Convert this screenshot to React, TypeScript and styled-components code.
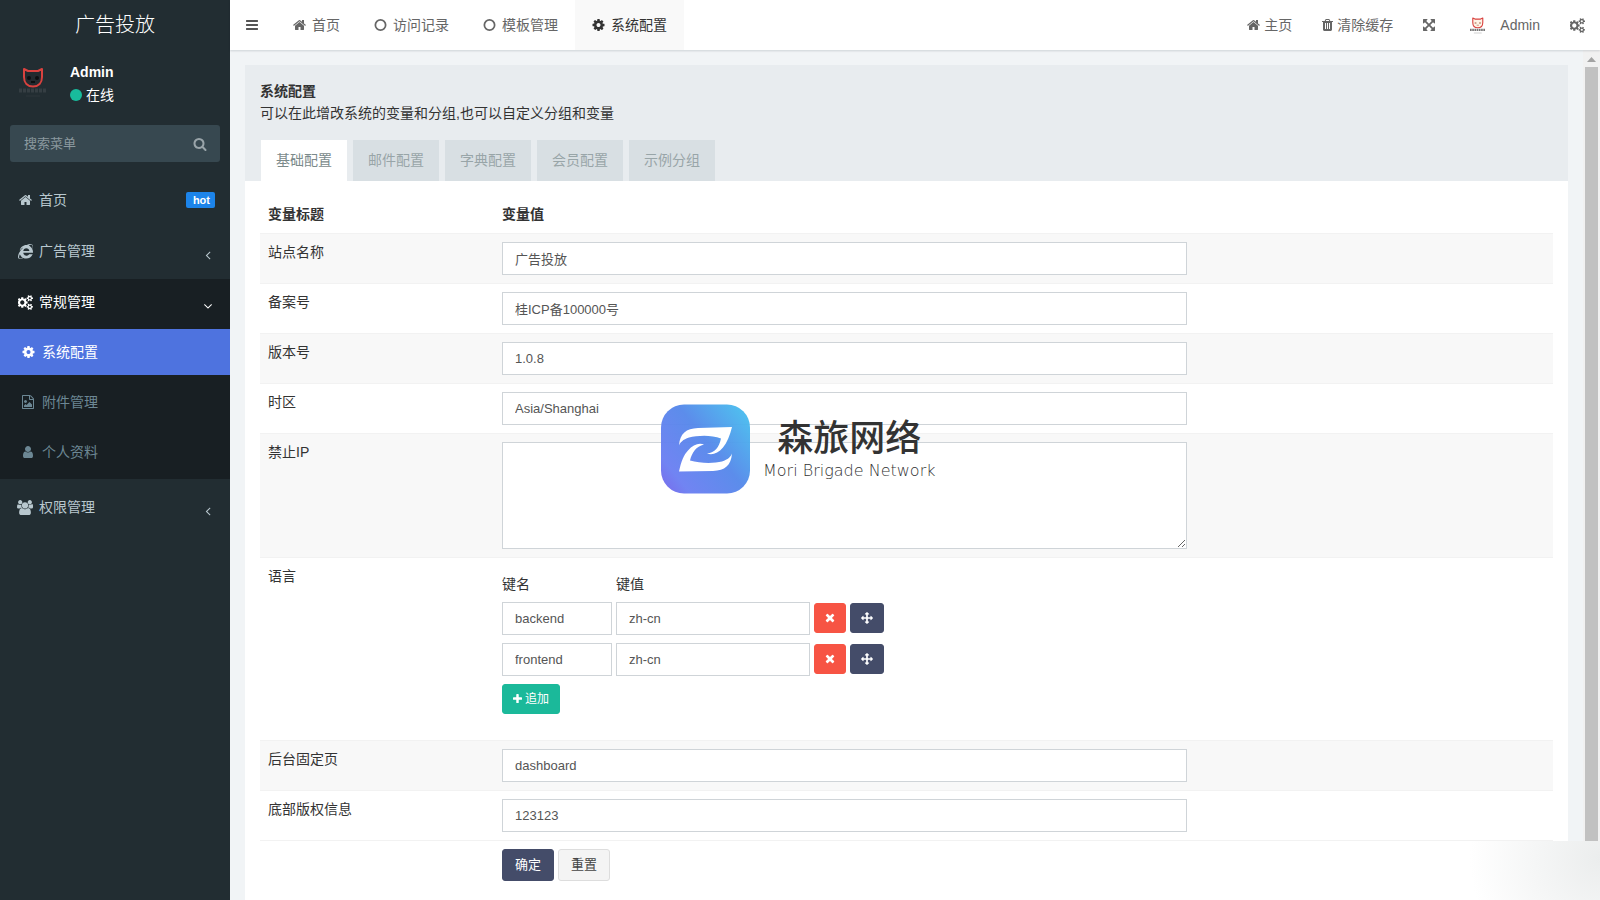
import React from "react";
import styled, { createGlobalStyle, css } from "styled-components";
import { FaInternetExplorer } from "react-icons/fa";

const GlobalStyle = createGlobalStyle`
  *, *::before, *::after { box-sizing: border-box; }
  html, body, #root { height: 100%; }
  body {
    margin: 0;
    font-family: "Liberation Sans", "Noto Sans CJK SC", sans-serif;
    font-size: 14px;
    line-height: 20px;
    color: #333;
    background: #f1f4f6;
  }
  button, input, textarea { font-family: inherit; }
  a { color: inherit; text-decoration: none; }
  ul { list-style: none; margin: 0; padding: 0; }
`;

/* ---------- icons ---------- */

const PATHS = {
  home: "M1472 992v480q0 26-19 45t-45 19h-384v-384h-256v384h-384q-26 0-45-19t-19-45v-480q0-1 .5-3t.5-3l575-474 575 474q1 2 1 6zm223-69l-62 74q-8 9-21 11h-3q-13 0-21-7l-692-577-692 577q-12 8-24 7-13-2-21-11l-62-74q-8-10-7-23.5t11-21.5l719-599q32-26 76-26t76 26l244 204v-195q0-14 9-23t23-9h192q14 0 23 9t9 23v408l219 182q10 8 11 21.5t-7 23.5z",
  cog: "M1152 896q0-106-75-181t-181-75-181 75-75 181 75 181 181 75 181-75 75-181zm512-109v222q0 12-8 23t-20 13l-185 28q-19 54-39 91 35 50 107 138 10 12 10 25t-9 23q-27 37-99 108t-94 71q-12 0-26-9l-138-108q-44 23-91 38-16 136-29 186-7 28-36 28h-222q-14 0-24.5-8.5t-11.5-21.5l-28-184q-49-16-90-37l-141 107q-10 9-25 9-14 0-25-11-126-114-165-168-7-10-7-23 0-12 8-23 15-21 51-66.5t54-70.5q-27-50-41-99l-183-27q-13-2-21-12.5t-8-23.5v-222q0-12 8-23t19-13l186-28q14-46 39-92-40-57-107-138-10-12-10-24 0-10 9-23 26-36 98.5-107.5t94.5-71.5q13 0 26 10l138 107q44-23 91-38 16-136 29-186 7-28 36-28h222q14 0 24.5 8.5t11.5 21.5l28 184q49 16 90 37l142-107q9-9 24-9 13 0 25 10 129 119 165 170 7 8 7 22 0 12-8 23-15 21-51 66.5t-54 70.5q26 50 41 98l183 28q13 2 21 12.5t8 23.5z",
  cogs: "M832 896q0-106-75-181t-181-75-181 75-75 181 75 181 181 75 181-75 75-181zm768 512q0-52-38-90t-90-38-90 38-38 90q0 53 37.5 90.5t90.5 37.5 90.5-37.5 37.5-90.5zm0-1024q0-52-38-90t-90-38-90 38-38 90q0 53 37.5 90.5t90.5 37.5 90.5-37.5 37.5-90.5zm-384 421v185q0 10-7 19.5t-16 10.5l-155 24q-11 35-32 76 34 48 90 115 7 11 7 20 0 12-7 19-23 30-82.5 89.5t-78.5 59.5q-11 0-21-7l-115-90q-37 19-77 31-11 108-23 155-7 24-30 24h-186q-11 0-20-7.5t-10-17.5l-23-153q-34-10-75-31l-118 89q-7 7-20 7-11 0-21-8-144-133-144-160 0-9 7-19 10-14 41-53t47-61q-23-44-35-82l-152-24q-10-1-17-9.5t-7-19.5v-185q0-10 7-19.5t16-10.5l155-24q11-35 32-76-34-48-90-115-7-11-7-20 0-12 7-20 22-30 82-89t79-59q11 0 21 7l115 90q34-18 77-32 11-108 23-154 7-24 30-24h186q11 0 20 7.5t10 17.5l23 153q34 10 75 31l118-89q8-7 20-7 11 0 21 8 144 133 144 160 0 8-7 19-12 16-42 54t-45 60q23 48 34 82l152 23q10 2 17 10.5t7 19.5zm640 533v140q0 16-149 31-12 27-30 52 51 113 51 138 0 4-4 7-122 71-124 71-8 0-46-47t-52-68q-20 2-30 2t-30-2q-14 21-52 68t-46 47q-2 0-124-71-4-3-4-7 0-25 51-138-18-25-30-52-149-15-149-31v-140q0-16 149-31 13-29 30-52-51-113-51-138 0-4 4-7 4-2 35-20t59-34 30-16q8 0 46 46.5t52 67.5q20-2 30-2t30 2q51-71 92-112l6-2q4 0 124 70 4 3 4 7 0 25-51 138 17 23 30 52 149 15 149 31zm0-1024v140q0 16-149 31-12 27-30 52 51 113 51 138 0 4-4 7-122 71-124 71-8 0-46-47t-52-68q-20 2-30 2t-30-2q-14 21-52 68t-46 47q-2 0-124-71-4-3-4-7 0-25 51-138-18-25-30-52-149-15-149-31v-140q0-16 149-31 13-29 30-52-51-113-51-138 0-4 4-7 4-2 35-20t59-34 30-16q8 0 46 46.5t52 67.5q20-2 30-2t30 2q51-71 92-112l6-2q4 0 124 70 4 3 4 7 0 25-51 138 17 23 30 52 149 15 149 31z",
  move: "M1792 896q0 26-19 45l-256 256q-19 19-45 19t-45-19-19-45v-128h-384v384h128q26 0 45 19t19 45-19 45l-256 256q-19 19-45 19t-45-19l-256-256q-19-19-19-45t19-45 45-19h128v-384h-384v128q0 26-19 45t-45 19-45-19l-256-256q-19-19-19-45t19-45l256-256q19-19 45-19t45 19 19 45v128h384v-384h-128q-26 0-45-19t-19-45 19-45l256-256q19-19 45-19t45 19l256 256q19 19 19 45t-19 45-45 19h-128v384h384v-128q0-26 19-45t45-19 45 19l256 256q19 19 19 45z",
  times: "M1490 1322q0 40-28 68l-136 136q-28 28-68 28t-68-28l-294-294-294 294q-28 28-68 28t-68-28l-136-136q-28-28-28-68t28-68l294-294-294-294q-28-28-28-68t28-68l136-136q28-28 68-28t68 28l294 294 294-294q28-28 68-28t68 28l136 136q28 28 28 68t-28 68l-294 294 294 294q28 28 28 68z",
  plus: "M1600 736v192q0 40-28 68t-68 28h-416v416q0 40-28 68t-68 28h-192q-40 0-68-28t-28-68v-416h-416q-40 0-68-28t-28-68v-192q0-40 28-68t68-28h416v-416q0-40 28-68t68-28h192q40 0 68 28t28 68v416h416q40 0 68 28t28 68z",
  bars: "M1664 1344v128q0 26-19 45t-45 19h-1408q-26 0-45-19t-19-45v-128q0-26 19-45t45-19h1408q26 0 45 19t19 45zm0-512v128q0 26-19 45t-45 19h-1408q-26 0-45-19t-19-45v-128q0-26 19-45t45-19h1408q26 0 45 19t19 45zm0-512v128q0 26-19 45t-45 19h-1408q-26 0-45-19t-19-45v-128q0-26 19-45t45-19h1408q26 0 45 19t19 45z",
  search: "M1216 832q0-185-131.5-316.5t-316.5-131.5-316.5 131.5-131.5 316.5 131.5 316.5 316.5 131.5 316.5-131.5 131.5-316.5zm512 832q0 52-38 90t-90 38q-54 0-90-38l-343-342q-179 124-399 124-143 0-273.5-55.5t-225-150-150-225-55.5-273.5 55.5-273.5 150-225 225-150 273.5-55.5 273.5 55.5 225 150 150 225 55.5 273.5q0 220-124 399l343 343q37 37 37 90z",
  angleLeft: "M1203 544q0 13-10 23l-393 393 393 393q10 10 10 23t-10 23l-50 50q-10 10-23 10t-23-10l-466-466q-10-10-10-23t10-23l466-466q10-10 23-10t23 10l50 50q10 10 10 23z",
  angleDown: "M1395 736q0 13-10 23l-466 466q-10 10-23 10t-23-10l-466-466q-10-10-10-23t10-23l50-50q10-10 23-10t23 10l393 393 393-393q10-10 23-10t23 10l50 50q10 10 10 23z",
  expand: "M1411 541l-355 355 355 355 144-144q29-31 70-14 39 17 39 59v448q0 26-19 45t-45 19h-448q-42 0-59-40-17-39 14-69l144-144-355-355-355 355 144 144q31 30 14 69-17 40-59 40h-448q-26 0-45-19t-19-45v-448q0-42 40-59 39-17 69 14l144 144 355-355-355-355-144 144q-19 19-45 19-12 0-24-5-40-17-40-59v-448q0-26 19-45t45-19h448q42 0 59 40 17 39-14 69l-144 144 355 355 355-355-144-144q-31-30-14-69 17-40 59-40h448q26 0 45 19t19 45v448q0 42-39 59-13 5-25 5-26 0-45-19z",
  user: "M1536 1399q0 109-62.5 187t-150.5 78h-854q-88 0-150.5-78t-62.5-187q0-85 8.5-160.5t31.5-152 58.5-131 94-89 134.5-34.5q131 128 313 128t313-128q76 0 134.5 34.5t94 89 58.5 131 31.5 152 8.5 160.5zm-256-887q0 159-112.5 271.5t-271.5 112.5-271.5-112.5-112.5-271.5 112.5-271.5 271.5-112.5 271.5 112.5 112.5 271.5z",
  fileImage: "M1596 380q28 28 48 76t20 88v1152q0 40-28 68t-68 28h-1344q-40 0-68-28t-28-68v-1600q0-40 28-68t68-28h896q40 0 88 20t76 48zm-444-244v376h376q-10-29-22-41l-313-313q-12-12-41-22zm384 1528v-1024h-416q-40 0-68-28t-28-68v-416h-768v1536h1280zm-128-448v320h-1024v-192l192-192 128 128 384-384zm-832-192q-80 0-136-56t-56-136 56-136 136-56 136 56 56 136-56 136-136 56z",
  trash: "M704 1376v-704q0-14-9-23t-23-9h-64q-14 0-23 9t-9 23v704q0 14 9 23t23 9h64q14 0 23-9t9-23zm256 0v-704q0-14-9-23t-23-9h-64q-14 0-23 9t-9 23v704q0 14 9 23t23 9h64q14 0 23-9t9-23zm256 0v-704q0-14-9-23t-23-9h-64q-14 0-23 9t-9 23v704q0 14 9 23t23 9h64q14 0 23-9t9-23zm-544-992h448l-48-117q-7-9-17-11h-317q-10 2-17 11zm928 32v64q0 14-9 23t-23 9h-96v948q0 83-47 143.5t-113 60.5h-832q-66 0-113-58.5t-47-141.5v-952h-96q-14 0-23-9t-9-23v-64q0-14 9-23t23-9h309l70-167q15-37 54-63t79-26h320q40 0 79 26t54 63l70 167h309q14 0 23 9t9 23z",
  group: "M593 896q-162 5-265 128h-134q-82 0-138-40.5t-56-118.5q0-353 124-353 6 0 43.5 21t97.5 42.5 119 21.5q67 0 133-23-5 37-5 66 0 159 93 292zm1071 637q0 120-73 189.5t-194 69.5h-874q-121 0-194-69.5t-73-189.5q0-53 3.5-103.5t14-109 26.5-108.5 43-97.5 62-81 85.5-53.5 111.5-20q10 0 43 21.5t73 48 107 48 135 21.5 135-21.5 107-48 73-48 43-21.5q61 0 111.5 20t85.5 53.5 62 81 43 97.5 26.5 108.5 14 109 3.5 103.5zm-1024-1277q0 106-75 181t-181 75-181-75-75-181 75-181 181-75 181 75 75 181zm704 384q0 159-112.5 271.5t-271.5 112.5-271.5-112.5-112.5-271.5 112.5-271.5 271.5-112.5 271.5 112.5 112.5 271.5zm576 225q0 78-56 118.5t-138 40.5h-134q-103-123-265-128 93-133 93-292 0-29-5-66 66 23 133 23 59 0 119-21.5t97.5-42.5 43.5-21q124 0 124 353zm-128-609q0 106-75 181t-181 75-181-75-75-181 75-181 181-75 181 75 75 181z",
  circle: "M896 352a544 544 0 1 0 0 1088a544 544 0 1 0 0-1088zM896 128a768 768 0 1 1 0 1536a768 768 0 1 1 0-1536z",
};
type IconName = keyof typeof PATHS;

/* view box and width (at a 14px height) of the glyphs that are not square */
const SHAPES: Partial<Record<IconName, { box: string; width: number }>> = {
  home: { box: "64 0 1664 1792", width: 13 },
  trash: { box: "192 0 1408 1792", width: 11 },
  expand: { box: "128 0 1536 1792", width: 12 },
  bars: { box: "128 0 1536 1792", width: 12 },
  times: { box: "192 0 1408 1792", width: 11 },
  plus: { box: "192 0 1408 1792", width: 11 },
  circle: { box: "64 64 1664 1664", width: 13 },
  cog: { box: "64 64 1664 1664", width: 13 },
  cogs: { box: "64 0 1792 1792", width: 15 },
  group: { box: "0 0 1920 1792", width: 16 },
};

const Svg = styled.svg`
  display: block;
  flex: none;
  fill: currentColor;
`;

function Icon({ name, size = 14 }: { name: IconName; size?: number }) {
  const shape = SHAPES[name] ?? { box: "0 0 1792 1792", width: 14 };
  return (
    <Svg
      viewBox={shape.box}
      width={shape.width + size - 14}
      height={shape.width > 14 ? 15 : size}
      fillRule="evenodd"
      aria-hidden="true"
    >
      <path d={PATHS[name]} />
    </Svg>
  );
}

function CatLogo({ size, caption, face, eyes }: { size: number; caption: string; face: string; eyes: string }) {
  return (
    <Svg width={size} height={size} viewBox="0 0 45 45" aria-hidden="true">
      <path
        d="M14 9L18 11H28L32 9V17C32 23 28.500 26.500 23 26.500S14 23 14 17Z"
        fill={face}
        stroke="#d9423f"
        strokeWidth="2"
        strokeLinejoin="round"
      />
      <circle cx="19" cy="18" r="2" fill={eyes} />
      <circle cx="27" cy="18" r="2" fill={eyes} />
      <path d="M21 22h4" stroke={eyes} strokeWidth="2" />
      <path d="M9 30.500h28" stroke={caption} strokeWidth="4" strokeDasharray="3 1" />
      <path d="M16 36h14" stroke={caption} strokeWidth="1" opacity="0.600" />
    </Svg>
  );
}

/* ---------- shell ---------- */

const Shell = styled.div`
  display: flex;
  min-height: 100%;
`;

const Sidebar = styled.aside`
  flex: none;
  width: 230px;
  background: #222d32;
  color: #b8c7ce;
`;

const Brand = styled.a`
  display: block;
  line-height: 50px;
  font-size: 20px;
  font-weight: 300;
  text-align: center;
  color: #fff;
`;

const UserPanel = styled.div`
  display: flex;
  gap: 15px;
  height: 75px;
  padding: 10px;
  color: #fff;
`;

const UserInfo = styled.div`
  display: flex;
  flex-direction: column;
  gap: 3px;
  padding-top: 2px;
`;

const Status = styled.a`
  display: flex;
  align-items: center;
  gap: 4px;
`;

const StatusDot = styled.i`
  width: 12px;
  height: 12px;
  border-radius: 50%;
  background: #18bc9c;
`;

const SearchForm = styled.form`
  display: flex;
  margin: 0 10px 15px;
  height: 37px;
  border-radius: 3px;
  background: #374850;
`;

const SearchInput = styled.input`
  flex: 1;
  min-width: 0;
  padding: 0 14px;
  border: 0;
  background: transparent;
  color: #fff;
  font-size: 13px;
  &::placeholder { color: #8b999f; opacity: 1; }
`;

const SearchButton = styled.button`
  width: 40px;
  padding: 0 13px;
  border: 0;
  background: transparent;
  color: #99a4a9;
`;

const MenuItem = styled.li`
  margin-bottom: 5px;
`;

const MenuLink = styled.a<{ $open?: boolean }>`
  display: flex;
  align-items: center;
  gap: 6px;
  height: 46px;
  padding: 0 15px 0 17px;
  ${(p) => p.$open && css`
    color: #fff;
    background: #181f23;
  `}
`;

const IconSlot = styled.span`
  display: flex;
  justify-content: center;
  width: 16px;
`;

const Badge = styled.small`
  margin-left: auto;
  padding: 0 5px 0 7px;
  border-radius: 2px;
  background: #1c84ea;
  color: #fff;
  font-size: 11px;
  line-height: 16px;
  font-weight: 700;
`;

const Caret = styled.span`
  margin-left: auto;
  padding-top: 8px;
`;

const SubMenu = styled.ul`
  padding-top: 4px;
  background: #181f23;
`;

const SubItem = styled.li`
  padding-bottom: 4px;
`;

const SubLink = styled.a<{ $active?: boolean }>`
  display: flex;
  align-items: center;
  gap: 6px;
  height: 46px;
  padding-left: 20px;
  color: ${(p) => (p.$active ? "#fff" : "#6c8794")};
  background: ${(p) => (p.$active ? "#4e73df" : "transparent")};
`;

const Main = styled.div`
  position: relative;
  flex: 1;
  min-width: 0;
  display: flex;
  flex-direction: column;
`;

const TopBar = styled.header`
  position: relative;
  display: flex;
  height: 50px;
  background: #fff;
  color: #666;
  box-shadow: 0 1px 2px rgba(0, 21, 41, 0.15);
`;

const Toggle = styled.button`
  padding: 0 16px;
  border: 0;
  background: transparent;
  color: #555;
`;

const NavTabs = styled.nav`
  display: flex;
  padding-left: 2px;
`;

const NavTab = styled.a<{ $active?: boolean }>`
  display: flex;
  align-items: center;
  gap: 6px;
  padding: 0 17px;
  color: ${(p) => (p.$active ? "#333" : "#666")};
  background: ${(p) => (p.$active ? "#f9f9f9" : "transparent")};
`;

const NavRight = styled.nav`
  display: flex;
  margin-left: auto;
`;

const NavLink = styled.a<{ $gap?: number }>`
  display: flex;
  align-items: center;
  gap: ${(p) => p.$gap ?? 4}px;
  padding: 0 15px;
`;

/* ---------- content ---------- */

const Body = styled.div`
  flex: 1;
  display: flex;
`;

const Content = styled.main`
  flex: 1;
  min-width: 0;
  display: flex;
  padding: 15px 15px 0;
`;

const Panel = styled.section`
  flex: 1;
  min-width: 0;
  background: #fff;
`;

const PanelHeading = styled.header`
  padding: 15px 15px 0;
  background: #e8ecef;
`;

const Lead = styled.div`
  padding-bottom: 16px;
  line-height: 22px;
`;

const Title = styled.strong`
  display: block;
`;

const Tabs = styled.ul`
  display: flex;
  gap: 4px;
`;

const Tab = styled.a<{ $active?: boolean }>`
  display: block;
  padding: 10px 15px;
  border: solid transparent;
  border-width: 0 1px;
  line-height: 21px;
  background: ${(p) => (p.$active ? "#fff" : "#d8dfe3")};
  background-clip: padding-box;
  color: ${(p) => (p.$active ? "#7b8a8b" : "#98a5a8")};
`;

const PanelBody = styled.form`
  padding: 15px 15px 10px;
`;

const Table = styled.table`
  width: 100%;
  table-layout: fixed;
  border-collapse: separate;
  border-spacing: 0;
  th, td {
    padding: 8px;
    text-align: left;
    vertical-align: top;
    font-weight: 400;
  }
  thead th { font-weight: 700; padding-bottom: 9px; }
  tbody tr > *, tfoot tr > * { border-top: 1px solid #f2f2f2; }
  tbody tr:nth-child(odd) > * { background: #f8f8f8; }
`;

const LabelCol = styled.col`
  width: 234px;
`;

const Field = styled.div`
  width: calc((100% + 30px) * 2 / 3 - 30px);
`;

const inputLook = css`
  display: block;
  width: 100%;
  border: 1px solid #cfd4d8;
  border-radius: 0;
  padding: 6px 12px;
  background: #fff;
  color: #555;
  font-size: 13px;
  line-height: 19px;
`;

const TextInput = styled.input`
  ${inputLook}
  height: 33px;
`;

const TextArea = styled.textarea`
  ${inputLook}
  height: 107px;
  resize: vertical;
`;

const Pairs = styled.div`
  display: grid;
  grid-template-columns: 110px 194px auto;
  justify-content: start;
  gap: 8px 4px;
  padding: 8px 0 18px;
`;

const PairTools = styled.div`
  display: flex;
  align-items: center;
  gap: 4px;
  height: 31px;
`;

const Button = styled.button<{ $tone: string; $small?: boolean; $light?: boolean }>`
  display: inline-flex;
  align-items: center;
  justify-content: center;
  gap: 3px;
  height: ${(p) => (p.$small ? 30 : 32)}px;
  padding: 0 ${(p) => (p.$small ? 10 : 12)}px;
  border: 1px solid ${(p) => (p.$light ? "#ddd" : p.$tone)};
  border-radius: 3px;
  background: ${(p) => p.$tone};
  color: ${(p) => (p.$light ? "#444" : "#fff")};
  font-size: ${(p) => (p.$small ? 12 : 13)}px;
  line-height: 18px;
`;

const Actions = styled.div`
  display: flex;
  gap: 4px;
`;

const ScrollTrack = styled.div`
  flex: none;
  width: 17px;
  padding: 0 2px;
  display: flex;
  flex-direction: column;
  align-items: stretch;
  background: #f1f1f1;
`;

const ScrollArrow = styled.svg`
  display: block;
  height: 17px;
  padding: 7px 2px 5px;
  width: 13px;
`;

const ScrollThumb = styled.div`
  flex: 1;
  margin-bottom: 59px;
  background: #c1c1c1;
`;

const CornerGlow = styled.div`
  position: absolute;
  right: 0;
  bottom: 0;
  width: 145px;
  height: 59px;
  background: radial-gradient(circle at 100% 30%, #ebeded 0, #fff 130px);
  pointer-events: none;
`;

const Watermark = styled.div`
  position: absolute;
  top: 404px;
  left: 431px;
  display: flex;
  gap: 13px;
  pointer-events: none;
`;

const WatermarkText = styled.div`
  padding-top: 5px;
  color: #333;
  text-align: center;
`;

const WatermarkName = styled.div`
  font-family: "Noto Sans CJK SC", sans-serif;
  font-size: 36px;
  font-weight: 500;
  line-height: 52px;
`;

const WatermarkLatin = styled.div`
  font-family: "DejaVu Sans Light", "DejaVu Sans", sans-serif;
  font-size: 16px;
  font-weight: 200;
  line-height: 20px;
`;

const NAV_TABS: { icon: IconName; label: string; active?: boolean }[] = [
  { icon: "home", label: "首页" },
  { icon: "circle", label: "访问记录" },
  { icon: "circle", label: "模板管理" },
  { icon: "cog", label: "系统配置", active: true },
];

const SUB_MENU: { icon: IconName; label: string; active?: boolean }[] = [
  { icon: "cog", label: "系统配置", active: true },
  { icon: "fileImage", label: "附件管理" },
  { icon: "user", label: "个人资料" },
];

const GROUPS = ["基础配置", "邮件配置", "字典配置", "会员配置", "示例分组"];

const LANGUAGES = [
  { key: "backend", value: "zh-cn" },
  { key: "frontend", value: "zh-cn" },
];

function TextRow({ id, label, value }: { id: string; label: string; value: string }) {
  return (
    <tr>
      <th scope="row">
        <label htmlFor={id}>{label}</label>
      </th>
      <td>
        <Field>
          <TextInput id={id} type="text" defaultValue={value} />
        </Field>
      </td>
    </tr>
  );
}

export default function App() {
  return (
    <>
      <GlobalStyle />
      <Shell>
        <Sidebar>
          <Brand href="#">广告投放</Brand>
          <UserPanel>
            <CatLogo size={45} caption="#353e43" face="#232a2f" eyes="#0d1012" />
            <UserInfo>
              <strong>Admin</strong>
              <Status href="#">
                <StatusDot />
                在线
              </Status>
            </UserInfo>
          </UserPanel>
          <SearchForm>
            <SearchInput type="text" placeholder="搜索菜单" aria-label="搜索菜单" />
            <SearchButton type="button" aria-label="搜索">
              <Icon name="search" />
            </SearchButton>
          </SearchForm>
          <ul>
            <MenuItem>
              <MenuLink href="#">
                <IconSlot><Icon name="home" /></IconSlot>
                首页
                <Badge>hot</Badge>
              </MenuLink>
            </MenuItem>
            <MenuItem>
              <MenuLink href="#">
                <IconSlot><FaInternetExplorer size={15} /></IconSlot>
                广告管理
                <Caret><Icon name="angleLeft" /></Caret>
              </MenuLink>
            </MenuItem>
            <MenuItem>
              <MenuLink href="#" $open>
                <IconSlot><Icon name="cogs" /></IconSlot>
                常规管理
                <Caret><Icon name="angleDown" /></Caret>
              </MenuLink>
              <SubMenu>
                {SUB_MENU.map((item) => (
                  <SubItem key={item.label}>
                    <SubLink href="#" $active={item.active}>
                      <IconSlot><Icon name={item.icon} /></IconSlot>
                      {item.label}
                    </SubLink>
                  </SubItem>
                ))}
              </SubMenu>
            </MenuItem>
            <MenuItem>
              <MenuLink href="#">
                <IconSlot><Icon name="group" /></IconSlot>
                权限管理
                <Caret><Icon name="angleLeft" /></Caret>
              </MenuLink>
            </MenuItem>
          </ul>
        </Sidebar>
        <Main>
          <TopBar>
            <Toggle type="button" aria-label="菜单">
              <Icon name="bars" />
            </Toggle>
            <NavTabs>
              {NAV_TABS.map((tab) => (
                <NavTab key={tab.label} href="#" $active={tab.active}>
                  <Icon name={tab.icon} />
                  {tab.label}
                </NavTab>
              ))}
            </NavTabs>
            <NavRight>
              <NavLink href="#"><Icon name="home" />主页</NavLink>
              <NavLink href="#"><Icon name="trash" />清除缓存</NavLink>
              <NavLink href="#" aria-label="全屏"><Icon name="expand" /></NavLink>
              <NavLink href="#" $gap={10}>
                <CatLogo size={25} caption="#777" face="#fff3e6" eyes="#c9a08a" />
                Admin
              </NavLink>
              <NavLink href="#" aria-label="设置"><Icon name="cogs" /></NavLink>
            </NavRight>
          </TopBar>
          <Body>
            <Content>
              <Panel>
                <PanelHeading>
                  <Lead>
                    <Title>系统配置</Title>
                    可以在此增改系统的变量和分组,也可以自定义分组和变量
                  </Lead>
                  <Tabs>
                    {GROUPS.map((name, i) => (
                      <li key={name}>
                        <Tab href="#" $active={i === 0}>{name}</Tab>
                      </li>
                    ))}
                  </Tabs>
                </PanelHeading>
                <PanelBody>
                  <Table>
                    <colgroup>
                      <LabelCol />
                      <col />
                    </colgroup>
                    <thead>
                      <tr>
                        <th scope="col">变量标题</th>
                        <th scope="col">变量值</th>
                      </tr>
                    </thead>
                    <tbody>
                      <TextRow id="name" label="站点名称" value="广告投放" />
                      <TextRow id="beian" label="备案号" value="桂ICP备100000号" />
                      <TextRow id="version" label="版本号" value="1.0.8" />
                      <TextRow id="timezone" label="时区" value="Asia/Shanghai" />
                      <tr>
                        <th scope="row"><label htmlFor="forbidden">禁止IP</label></th>
                        <td>
                          <Field><TextArea id="forbidden" /></Field>
                        </td>
                      </tr>
                      <tr>
                        <th scope="row">语言</th>
                        <td>
                          <Pairs>
                            <span>键名</span>
                            <span>键值</span>
                            <span />
                            {LANGUAGES.map((row) => (
                              <React.Fragment key={row.key}>
                                <TextInput type="text" aria-label="键名" defaultValue={row.key} />
                                <TextInput type="text" aria-label="键值" defaultValue={row.value} />
                                <PairTools>
                                  <Button type="button" $small $tone="#f75444" aria-label="删除">
                                    <Icon name="times" size={13} />
                                  </Button>
                                  <Button type="button" $small $tone="#444c69" aria-label="移动">
                                    <Icon name="move" size={12} />
                                  </Button>
                                </PairTools>
                              </React.Fragment>
                            ))}
                            <div>
                              <Button type="button" $small $tone="#1bb99a">
                                <Icon name="plus" size={12} />
                                追加
                              </Button>
                            </div>
                          </Pairs>
                        </td>
                      </tr>
                      <TextRow id="fixedpage" label="后台固定页" value="dashboard" />
                      <TextRow id="copyright" label="底部版权信息" value="123123" />
                    </tbody>
                    <tfoot>
                      <tr>
                        <td />
                        <td>
                          <Actions>
                            <Button type="submit" $tone="#444c69">确定</Button>
                            <Button type="reset" $tone="#f4f4f4" $light>重置</Button>
                          </Actions>
                        </td>
                      </tr>
                    </tfoot>
                  </Table>
                </PanelBody>
              </Panel>
            </Content>
            <ScrollTrack>
              <ScrollArrow viewBox="0 0 9 5" aria-hidden="true">
                <path d="M0 5L4.500 0L9 5Z" fill="#a3a3a3" />
              </ScrollArrow>
              <ScrollThumb />
            </ScrollTrack>
          </Body>
          <CornerGlow />
          <Watermark>
            <svg width="89" height="90" viewBox="0 0 89 89" aria-hidden="true">
              <defs>
                <linearGradient id="wm" x1="0" y1="1" x2="1" y2="0.200">
                  <stop offset="0" stopColor="#7463ea" />
                  <stop offset="0.200" stopColor="#6b7ff2" />
                  <stop offset="0.600" stopColor="#5588ea" />
                  <stop offset="1" stopColor="#49b9ee" />
                </linearGradient>
              </defs>
              <rect width="89" height="89" rx="23" fill="url(#wm)" opacity="0.960" />
              <path
                d="M18 41C19 29 25 24 37 23.500L71 22.500C69 31 66 38 62 43C57 49 51 51 46 49C54 48 58 43 60 34C50 30 36 31 28 33C22 35 19 38 18 41Z"
                fill="#fff"
              />
              <path
                d="M71 49C70 61 64 66 52 66.500L18 67C20 57 23 50 27 46C32 40 38 38 43 40C35 42 31 48 29 56C39 59 53 59 61 57C67 55 70 52 71 49Z"
                fill="#fff"
              />
            </svg>
            <WatermarkText>
              <WatermarkName>森旅网络</WatermarkName>
              <WatermarkLatin>Mori Brigade Network</WatermarkLatin>
            </WatermarkText>
          </Watermark>
        </Main>
      </Shell>
    </>
  );
}
